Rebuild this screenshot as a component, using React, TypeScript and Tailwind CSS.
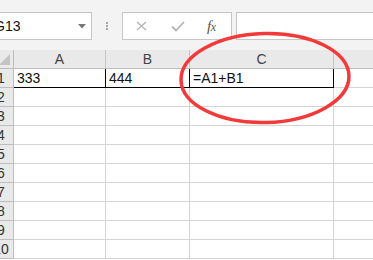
import React from 'react';

const rows = [2, 3, 4, 5, 6, 7, 8, 9, 10];

export default function App() {
  return (
    <div className="relative w-[373px] h-[260px] overflow-hidden bg-white font-['Liberation_Sans',Arial,sans-serif]">
      {/* Formula bar strip */}
      <div className="h-[50px] bg-[#f3f3f3] flex items-start pt-[12px]">
        {/* Name box */}
        <div className="ml-[-10px] w-[102px] h-[28px] bg-white border border-[#c6c6c6] flex items-center pl-[3px] pr-[5px]">
          <span className="text-[14px] text-[#111] flex-1">G13</span>
          <svg width="8" height="5" viewBox="0 0 8 5">
            <polygon points="0,0 8,0 4,4.5" fill="#777" />
          </svg>
        </div>
        {/* Separator dots */}
        <div className="w-[30px] h-[28px] flex flex-col items-center justify-center gap-[1px]">
          <span className="w-[2px] h-[2px] bg-[#a6a6a6]" />
          <span className="w-[2px] h-[2px] bg-[#a6a6a6]" />
          <span className="w-[2px] h-[2px] bg-[#a6a6a6]" />
        </div>
        {/* Cancel / enter / fx */}
        <div className="w-[110px] h-[28px] bg-white border border-[#c6c6c6] flex items-center">
          <svg className="ml-[13px]" width="11" height="10" viewBox="0 0 11 10">
            <path d="M1 1 L10 9 M10 1 L1 9" stroke="#b4b4b4" strokeWidth="1.4" />
          </svg>
          <svg className="ml-[24px]" width="14" height="11" viewBox="0 0 14 11">
            <path d="M1 5.5 L5 9.5 L13 1" stroke="#b4b4b4" strokeWidth="1.8" fill="none" />
          </svg>
          <span className="ml-[22px] text-[15px] italic text-[#555] font-['Liberation_Serif',serif] tracking-[-0.5px] leading-none">
            f<span className="text-[12px]">x</span>
          </span>
        </div>
        {/* Formula input */}
        <div className="ml-[4px] flex-1 mr-[-4px] h-[28px] bg-white border border-[#c6c6c6]" />
      </div>

      {/* Column headers */}
      <div className="flex h-[19px] bg-[#e9e9e9] border-b border-[#bdbdbd] text-[14px] text-[#444]">
        <div className="relative ml-[-14px] w-[28px] border-r border-[#bdbdbd]">
          <svg className="absolute right-[3px] bottom-[3px]" width="11" height="11" viewBox="0 0 11 11">
            <polygon points="11,0 11,11 0,11" fill="#c4c4c4" />
          </svg>
        </div>
        <div className="w-[92px] border-r border-[#c6c6c6] flex items-center justify-center">A</div>
        <div className="w-[84px] border-r border-[#c6c6c6] flex items-center justify-center">B</div>
        <div className="w-[144px] border-r border-[#c6c6c6] flex items-center justify-center">C</div>
        <div className="flex-1" />
      </div>

      {/* Row 1 */}
      <div className="flex h-[19px] text-[14px] text-[#111]">
        <div className="ml-[-14px] w-[28px] bg-[#e9e9e9] border-r border-b border-[#bdbdbd] flex items-center justify-center pl-[3px] text-[14px] text-[#333]">
          1
        </div>
        <div className="w-[92px] border-r border-b border-black flex items-center pl-[3px]">333</div>
        <div className="w-[84px] border-r border-b border-black flex items-center pl-[3px]">444</div>
        <div className="w-[144px] border-r border-b border-black flex items-center pl-[3px]">=A1+B1</div>
        <div className="flex-1 border-b border-[#d4d4d4]" />
      </div>

      {/* Empty rows */}
      {rows.map((n) => (
        <div key={n} className="flex h-[19px]">
          <div className="ml-[-14px] w-[28px] bg-[#e9e9e9] border-r border-b border-[#bdbdbd] flex items-center justify-center pl-[3px] text-[14px] text-[#333]">
            {n}
          </div>
          <div className="w-[92px] border-r border-b border-[#d4d4d4]" />
          <div className="w-[84px] border-r border-b border-[#d4d4d4]" />
          <div className="w-[144px] border-r border-b border-[#d4d4d4]" />
          <div className="flex-1 border-b border-[#d4d4d4]" />
        </div>
      ))}

      {/* Red annotation circle */}
      <svg className="absolute inset-0 pointer-events-none" width="373" height="260" viewBox="0 0 373 260">
        <ellipse
          cx="265"
          cy="78"
          rx="84"
          ry="44.5"
          fill="none"
          stroke="#f23a3a"
          strokeWidth="3.5"
          transform="rotate(-1.5 265 78)"
        />
      </svg>
    </div>
  );
}
